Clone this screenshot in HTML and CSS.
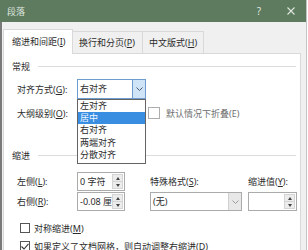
FILE: index.html
```html
<!DOCTYPE html>
<html lang="zh-CN">

<head>
    <meta charset="UTF-8">
    <meta name="viewport" content="width=device-width, initial-scale=1.0">
    <title>段落</title>
    <link rel="stylesheet" href="styles.css">
</head>

<body>
    <div class="dialog">
        <header class="titlebar">
            <span class="title">段落</span>
            <span class="help">?</span>
            <svg class="close" width="8" height="8" viewBox="0 0 8 8">
                <path d="M0.5 0.5 L7.5 7.5 M7.5 0.5 L0.5 7.5" stroke="#dfe7df" stroke-width="1.1" fill="none" />
            </svg>
        </header>

        <div class="dialog-body">
            <nav class="tabs">
                <div class="tab tab-active">缩进和间距(<u>I</u>)</div>
                <div class="tab">换行和分页(<u>P</u>)</div>
                <div class="tab">中文版式(<u>H</u>)</div>
            </nav>

            <section class="panel">
                <div class="group-title"><span>常规</span><i class="group-line"></i></div>

                <div class="form-row row-align">
                    <label class="row-label">对齐方式(<u>G</u>):</label>
                    <div class="select select-open">
                        <span class="select-text">右对齐</span>
                        <span class="select-btn">
                            <svg width="7" height="4" viewBox="0 0 7 4">
                                <path d="M0.5 0.5 L3.5 3.5 L6.5 0.5" stroke="#4a5a6a" stroke-width="1" fill="none" />
                            </svg>
                        </span>
                        <ul class="dropdown">
                            <li>左对齐</li>
                            <li class="picked">居中</li>
                            <li>右对齐</li>
                            <li>两端对齐</li>
                            <li>分散对齐</li>
                        </ul>
                    </div>
                </div>

                <div class="form-row row-outline">
                    <label class="row-label">大纲级别(<u>O</u>):</label>
                    <div class="select select-hidden"></div>
                    <span class="checkbox checkbox-outline"></span>
                    <span class="check-text muted">默认情况下折叠(E)</span>
                </div>

                <div class="group-title group-indent"><span>缩进</span><i class="group-line"></i></div>

                <div class="indent-grid">
                    <label class="row-label">左侧(<u>L</u>):</label>
                    <div class="spin">
                        <span class="spin-text">0 字符</span>
                        <span class="spin-btns"><b class="up"></b><b class="down"></b></span>
                    </div>
                    <label class="col-label">特殊格式(<u>S</u>):</label>
                    <label class="col-label">缩进值(<u>Y</u>):</label>

                    <label class="row-label">右侧(<u>R</u>):</label>
                    <div class="spin">
                        <span class="spin-text">-0.08 厘</span>
                        <span class="spin-btns"><b class="up"></b><b class="down"></b></span>
                    </div>
                    <div class="select select-plain">
                        <span class="select-text">(无)</span>
                        <span class="select-btn">
                            <svg width="7" height="4" viewBox="0 0 7 4">
                                <path d="M0.5 0.5 L3.5 3.5 L6.5 0.5" stroke="#9a9a9a" stroke-width="1" fill="none" />
                            </svg>
                        </span>
                    </div>
                    <div class="spin spin-wide">
                        <span class="spin-text"></span>
                        <span class="spin-btns"><b class="up"></b><b class="down"></b></span>
                    </div>
                </div>

                <div class="check-row">
                    <span class="checkbox"></span>
                    <span class="check-text">对称缩进(<u>M</u>)</span>
                </div>
                <div class="check-row check-row-last">
                    <span class="checkbox checkbox-on">
                        <svg width="8" height="7" viewBox="0 0 8 7">
                            <path d="M0.5 3.5 L3 6 L7.5 0.8" stroke="#333" stroke-width="1.1" fill="none" />
                        </svg>
                    </span>
                    <span class="check-text">如果定义了文档网格，则自动调整右缩进(D)</span>
                </div>
            </section>
        </div>
    </div>
</body>

</html>
```

FILE: styles.css
```css
* {
    box-sizing: border-box;
}

body {
    margin: 0;
    background: #fff;
    font-family: "Noto Sans", "Noto Sans CJK SC", sans-serif;
    font-size: 9px;
    color: #2c2c2c;
}

u {
    text-decoration: underline;
    text-underline-offset: 1px;
}

.dialog {
    width: 307px;
    height: 250px;
    overflow: hidden;
    background: #f0f0f0;
    border-right: 1px solid #c4c4c4;
}

/* Title bar */
.titlebar {
    height: 22px;
    background: #5e7a5f;
    color: #dfe7df;
    display: flex;
    align-items: center;
    padding: 0 11px 0 7px;
}

.title {
    flex: 1;
}

.help {
    font-size: 10px;
    margin-right: 26px;
}

/* Body + tabs */
.dialog-body {
    height: 228px;
    border-left: 2px solid #7a7a7a;
    padding: 7px 0 0 1px;
}

.tabs {
    display: flex;
    align-items: flex-end;
    height: 24px;
}

.tab {
    height: 22px;
    line-height: 21px;
    padding-left: 6px;
    border: 1px solid #d9d9d9;
    border-left: none;
    border-bottom: none;
    background: #f0f0f0;
}

.tab:nth-child(1) {
    width: 70px;
}

.tab:nth-child(2) {
    width: 70px;
}

.tab:nth-child(3) {
    width: 61px;
}

.tab-active {
    height: 25px;
    line-height: 24px;
    padding-left: 8px;
    margin-bottom: -1px;
    border-left: 1px solid #d9d9d9;
    background: #fff;
    position: relative;
    z-index: 1;
}

.panel {
    width: 298px;
    height: 200px;
    background: #fff;
    border: 1px solid #d9d9d9;
}

/* Group headings */
.group-title {
    display: flex;
    align-items: center;
    height: 13px;
    margin-top: 6px;
    padding: 0 4px 0 8px;
}

.group-line {
    flex: 1;
    height: 1px;
    margin-left: 8px;
    background: #dcdcdc;
}

.group-indent {
    margin-top: 26px;
}

/* Rows */
.form-row {
    display: flex;
    align-items: center;
    height: 20px;
    padding-left: 13px;
}

.row-align {
    margin-top: 6px;
}

.row-outline {
    margin-top: 4px;
}

.row-label {
    width: 60px;
}

.muted {
    color: #6f6f6f;
}

/* Combo boxes */
.select {
    display: flex;
    height: 20px;
    border: 1px solid #ababab;
    background: #fff;
    position: relative;
}

.select-open {
    width: 69px;
    border-color: #6d9ccf;
}

.select-hidden {
    width: 69px;
}

.select-text {
    flex: 1;
    line-height: 18px;
    padding-left: 2px;
}

.select-btn {
    width: 13px;
    display: flex;
    align-items: center;
    justify-content: center;
}

.select-open .select-btn {
    background: #cfe4f7;
    border-left: 1px solid #6d9ccf;
}

.select-plain .select-btn {
    background: #e8e8e8;
    border-left: 1px solid #cfcfcf;
}

.dropdown {
    position: absolute;
    top: 19px;
    left: -1px;
    width: 69px;
    margin: 0;
    padding: 0 0 2px;
    list-style: none;
    background: #fff;
    border: 1px solid #646464;
    z-index: 5;
}

.dropdown li {
    height: 12.2px;
    line-height: 12px;
    padding-left: 2px;
}

.dropdown .picked {
    background: #3a8ee2;
    color: #eef6ff;
}

/* Checkboxes */
.checkbox {
    width: 10px;
    height: 10px;
    border: 1px solid #555;
    background: #fff;
    display: flex;
    align-items: center;
    justify-content: center;
}

.checkbox-outline {
    width: 12px;
    height: 12px;
    margin-left: 2px;
    border-color: #adadad;
}

.check-text {
    margin-left: 4px;
}

.checkbox-outline + .check-text {
    margin-left: 6px;
}

/* Indent fields */
.indent-grid {
    display: grid;
    grid-template-columns: 60px 73px 98px 49px;
    grid-template-rows: 19px 19px;
    row-gap: 1px;
    align-items: center;
    margin-top: 10px;
    padding-left: 13px;
}

.spin {
    display: flex;
    width: 48px;
    height: 19px;
    border: 1px solid #ababab;
}

.spin-wide {
    width: 49px;
}

.spin-text {
    flex: 1;
    line-height: 17px;
    padding-left: 2px;
    white-space: nowrap;
    overflow: hidden;
}

.spin-btns {
    width: 11px;
    margin: 1px 1px 1px 0;
    display: flex;
    flex-direction: column;
    background: #ececec;
    border: 1px solid #d4d4d4;
}

.spin-btns b {
    flex: 1;
    display: flex;
    align-items: center;
    justify-content: center;
}

.spin-btns .up {
    border-bottom: 1px solid #d4d4d4;
}

.spin-btns .up::before,
.spin-btns .down::before {
    content: "";
    border-left: 2.5px solid transparent;
    border-right: 2.5px solid transparent;
}

.spin-btns .up::before {
    border-bottom: 3px solid #444;
}

.spin-btns .down::before {
    border-top: 3px solid #444;
}

.select-plain {
    width: 92px;
    height: 19px;
}

.check-row {
    display: flex;
    align-items: center;
    height: 14px;
    margin-top: 10px;
    padding-left: 16px;
}

.check-row-last {
    margin-top: 4px;
}
```
